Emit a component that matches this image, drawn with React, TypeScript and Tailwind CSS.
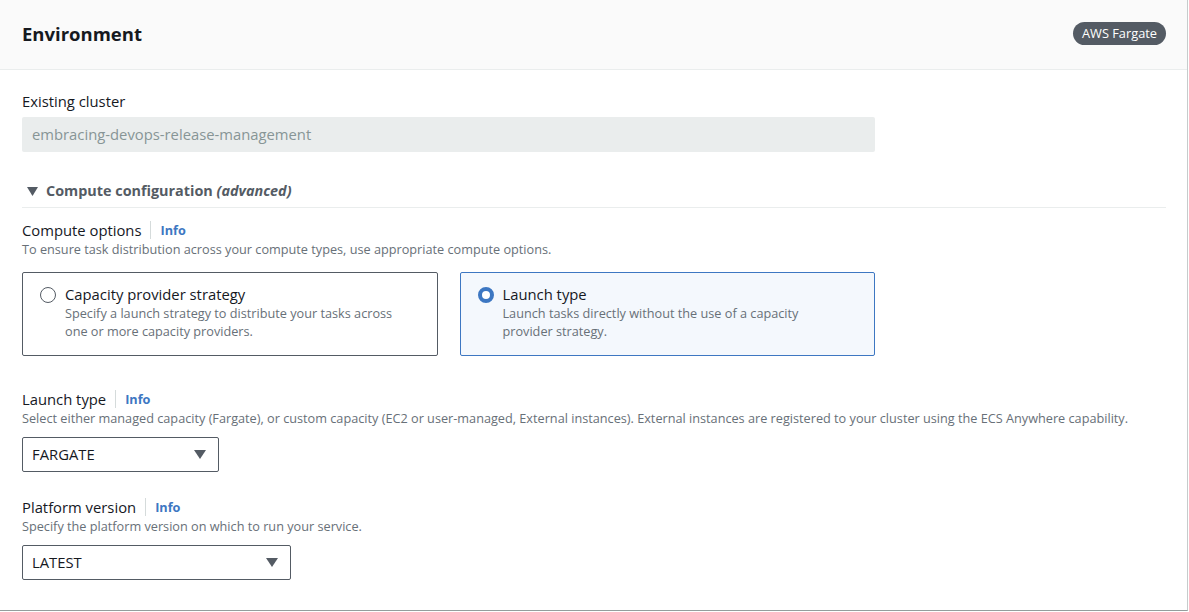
import React from "react";

function InfoLabel({ label }: { label: string }) {
  return (
    <div className="flex items-center text-[14.8px] leading-[20px] text-[#16191f]">
      <span>{label}</span>
      <span className="mx-[9px] h-[18px] w-px bg-[#d5dbdb]" />
      <span className="text-[12.7px] font-bold text-[#3d77c2]">Info</span>
    </div>
  );
}

function Select({ value, width }: { value: string; width: string }) {
  return (
    <div
      className={`flex h-[35px] items-center justify-between rounded-[2px] border border-[#545b64] bg-white pl-[9px] pr-[12px] text-[14.8px] text-[#16191f] ${width}`}
    >
      <span>{value}</span>
      <svg width="12" height="9" viewBox="0 0 12 9">
        <path d="M0 0 L12 0 L6 9 Z" fill="#545b64" />
      </svg>
    </div>
  );
}

function RadioCard({
  title,
  desc,
  checked,
}: {
  title: string;
  desc: string;
  checked?: boolean;
}) {
  return (
    <div
      className={`flex h-[84px] gap-[9px] rounded-[2px] border px-[17px] pt-[11px] ${
        checked ? "border-[#3d77c2] bg-[#f4f8fd]" : "border-[#545b64] bg-white"
      }`}
    >
      <div className="pt-[3px]">
        {checked ? (
          <div className="h-[16px] w-[16px] rounded-full border-[4px] border-[#3d77c2] bg-white" />
        ) : (
          <div className="h-[16px] w-[16px] rounded-full border-[1.5px] border-[#545b64] bg-white" />
        )}
      </div>
      <div className="max-w-[340px]">
        <div className="text-[14.8px] leading-[20px] text-[#16191f]">{title}</div>
        <div className="text-[12.7px] leading-[18px] text-[#687078]">{desc}</div>
      </div>
    </div>
  );
}

export default function App() {
  return (
    <div
      className="h-[612px] w-[1189px] overflow-hidden bg-white"
      style={{ fontFamily: '"Open Sans", "Noto Sans", sans-serif' }}
    >
      <div className="h-[611px] w-[1188px] border-r border-b border-r-[#c6cccc] border-b-[#959d9d] bg-white">
        {/* ── Header ─────────────────────────────── */}
        <div className="flex h-[70px] items-center justify-between border-b border-[#eaeded] bg-[#fafafa] pb-[2px] pl-[22px] pr-[21px]">
          <h2 className="text-[18.5px] font-bold text-[#16191f]">Environment</h2>
          <span className="rounded-full bg-[#545b64] px-[9px] py-[3px] text-[12.8px] leading-[17px] text-white">
            AWS Fargate
          </span>
        </div>

        <div className="pl-[22px] pr-[21px] pt-[21px]">
          {/* ── Existing cluster ─────────────────── */}
          <div className="text-[14.8px] leading-[20px] text-[#16191f]">Existing cluster</div>
          <div className="mt-[6px] flex h-[35px] w-[853px] items-center rounded-[2px] bg-[#eaeded] px-[10px] text-[14.8px] text-[#879596]">
            embracing-devops-release-management
          </div>

          {/* ── Compute configuration ────────────── */}
          <div className="mt-[29px] flex items-center gap-[8px] border-b border-[#eaeded] pb-[6px] pl-[5px]">
            <svg width="11" height="9" viewBox="0 0 11 9">
              <path d="M0 0 L11 0 L5.5 9 Z" fill="#545b64" />
            </svg>
            <span className="text-[14.4px] font-bold leading-[20px] text-[#545b64]">
              Compute configuration <i>(advanced)</i>
            </span>
          </div>

          <div className="mt-[12px]">
            <InfoLabel label="Compute options" />
            <div className="text-[12.7px] leading-[19px] text-[#687078]">
              To ensure task distribution across your compute types, use appropriate compute options.
            </div>
          </div>

          <div className="mt-[13px] grid w-[853px] grid-cols-2 gap-[22px]">
            <RadioCard
              title="Capacity provider strategy"
              desc="Specify a launch strategy to distribute your tasks across one or more capacity providers."
            />
            <RadioCard
              checked
              title="Launch type"
              desc="Launch tasks directly without the use of a capacity provider strategy."
            />
          </div>

          {/* ── Launch type ──────────────────────── */}
          <div className="mt-[33px]">
            <InfoLabel label="Launch type" />
            <div className="text-[12.7px] leading-[19px] text-[#687078]">
              Select either managed capacity (Fargate), or custom capacity (EC2 or user-managed, External instances). External instances are registered to your cluster using the ECS Anywhere capability.
            </div>
            <div className="mt-[9px]">
              <Select value="FARGATE" width="w-[197px]" />
            </div>
          </div>

          {/* ── Platform version ─────────────────── */}
          <div className="mt-[25px]">
            <InfoLabel label="Platform version" />
            <div className="text-[12.7px] leading-[19px] text-[#687078]">
              Specify the platform version on which to run your service.
            </div>
            <div className="mt-[9px]">
              <Select value="LATEST" width="w-[269px]" />
            </div>
          </div>
        </div>
      </div>
    </div>
  );
}
